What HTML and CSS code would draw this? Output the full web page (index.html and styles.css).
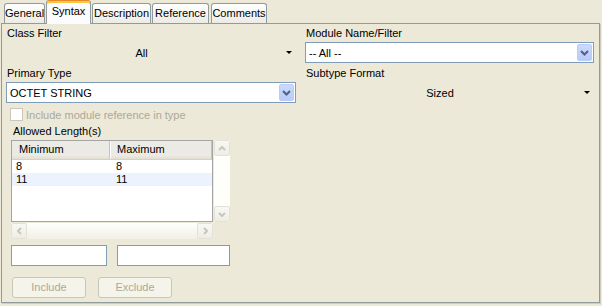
FILE: index.html
```html
<!DOCTYPE html>
<html lang="en">
<head>
    <meta charset="UTF-8">
    <title>Syntax</title>
    <link rel="stylesheet" href="styles.css">
</head>
<body>
    <div class="tabs">
        <div class="tab tab-general">General</div>
        <div class="tab tab-syntax active">Syntax</div>
        <div class="tab tab-description">Description</div>
        <div class="tab tab-reference">Reference</div>
        <div class="tab tab-comments">Comments</div>
    </div>

    <div class="panel">
        <div class="col">
            <div class="label">Class Filter</div>
            <div class="flat-combo">
                <span class="flat-value">All</span>
                <span class="tri"></span>
            </div>
            <div class="label">Primary Type</div>
            <div class="combo">
                <span class="combo-value">OCTET STRING</span>
                <span class="combo-btn">
                    <svg width="9" height="6" viewBox="0 0 9 6"><path d="M1 1 L4.5 4.5 L8 1" stroke="#4d6185" stroke-width="2" fill="none"/></svg>
                </span>
            </div>
            <div class="check-row">
                <span class="checkbox"></span>
                <span class="disabled-text">Include module reference in type</span>
            </div>

            <div class="lengths">
                <div class="group-label">Allowed Length(s)</div>
                <div class="table-area">
                    <div class="table-left">
                        <div class="table">
                            <div class="thead">
                                <div class="th th-min">Minimum</div>
                                <div class="th th-max">Maximum</div>
                            </div>
                            <div class="tr">
                                <div class="td td-min">8</div>
                                <div class="td">8</div>
                            </div>
                            <div class="tr alt">
                                <div class="td td-min">11</div>
                                <div class="td">11</div>
                            </div>
                        </div>
                        <div class="hscroll">
                            <span class="sbtn">
                                <svg width="5" height="8" viewBox="0 0 5 8"><path d="M4 1 L1 4 L4 7" stroke="#c9c7ba" stroke-width="2" fill="none"/></svg>
                            </span>
                            <span class="sbtn">
                                <svg width="5" height="8" viewBox="0 0 5 8"><path d="M1 1 L4 4 L1 7" stroke="#c9c7ba" stroke-width="2" fill="none"/></svg>
                            </span>
                        </div>
                    </div>
                    <div class="vscroll">
                        <span class="sbtn">
                            <svg width="8" height="5" viewBox="0 0 8 5"><path d="M1 4 L4 1 L7 4" stroke="#c9c7ba" stroke-width="2" fill="none"/></svg>
                        </span>
                        <span class="sbtn">
                            <svg width="8" height="5" viewBox="0 0 8 5"><path d="M1 1 L4 4 L7 1" stroke="#c9c7ba" stroke-width="2" fill="none"/></svg>
                        </span>
                    </div>
                </div>
                <div class="inputs">
                    <div class="field field-min"></div>
                    <div class="field field-max"></div>
                </div>
                <div class="buttons">
                    <div class="btn">Include</div>
                    <div class="btn">Exclude</div>
                </div>
            </div>
        </div>

        <div class="col">
            <div class="label">Module Name/Filter</div>
            <div class="combo">
                <span class="combo-value">-- All --</span>
                <span class="combo-btn">
                    <svg width="9" height="6" viewBox="0 0 9 6"><path d="M1 1 L4.5 4.5 L8 1" stroke="#4d6185" stroke-width="2" fill="none"/></svg>
                </span>
            </div>
            <div class="label">Subtype Format</div>
            <div class="flat-combo">
                <span class="flat-value">Sized</span>
                <span class="tri"></span>
            </div>
        </div>
    </div>
</body>
</html>
```

FILE: styles.css
```css
* {
    margin: 0;
    padding: 0;
    box-sizing: border-box;
}

body {
    font-family: "Liberation Sans", Arial, sans-serif;
    font-size: 11px;
    background: #ece9d8;
    color: #000;
    width: 602px;
    height: 306px;
    overflow: hidden;
}

/* tabs */

.tabs {
    display: flex;
    align-items: flex-end;
    height: 23px;
    padding-left: 4px;
    position: relative;
    z-index: 1;
}

.tab {
    height: 20px;
    line-height: 19px;
    text-align: center;
    border: 1px solid #919b9c;
    border-bottom: none;
    border-radius: 3px 3px 0 0;
    background: linear-gradient(#ffffff, #f3f3ef 60%, #ecebe6);
    margin-right: 1px;
}

.tab-general { width: 41px; }
.tab-syntax { width: 45px; }
.tab-description { width: 59px; }
.tab-reference { width: 57px; margin-right: 2px; }
.tab-comments { width: 56px; }

.tab.active {
    height: 24px;
    margin-bottom: -1px;
    line-height: 21px;
    background: #fcfcfe;
    border-top: 1px solid #e68b2c;
    box-shadow: inset 0 2px 0 #ffc83c;
}

/* panel */

.panel {
    margin-left: 1px;
    width: 599px;
    height: 280px;
    border: 1px solid #919b9c;
    box-shadow: 1px 1px 0 #d0cdbd;
    padding-left: 4px;
    display: grid;
    grid-template-columns: 290px 289px;
    column-gap: 9px;
    align-items: start;
}

.label {
    height: 18px;
    line-height: 18px;
    padding-left: 1px;
}

.flat-combo {
    height: 21px;
    display: flex;
    align-items: center;
    margin-bottom: 1px;
}

.flat-value {
    flex: 1;
    text-align: center;
    padding-left: 1px;
}

.tri {
    width: 0;
    height: 0;
    border-left: 3px solid transparent;
    border-right: 3px solid transparent;
    border-top: 3px solid #000;
    margin: 0 4px 0 10px;
}

.combo {
    height: 21px;
    border: 1px solid #7f9db9;
    background: #fff;
    display: flex;
    align-items: center;
    margin-bottom: 1px;
}

.combo-value {
    flex: 1;
    padding-left: 3px;
}

.combo-btn {
    width: 15px;
    height: 17px;
    margin-right: 1px;
    border: 1px solid #bacdf9;
    border-radius: 2px;
    background: linear-gradient(#cbdafd, #b8cbf7);
    display: flex;
    align-items: center;
    justify-content: center;
}

/* checkbox */

.check-row {
    display: flex;
    align-items: center;
    height: 13px;
    margin: 5px 0 0 4px;
}

.checkbox {
    width: 13px;
    height: 13px;
    border: 1px solid #cac8bb;
    background: #fff;
    margin-right: 3px;
}

.disabled-text {
    color: #aca899;
}

/* allowed lengths */

.lengths {
    margin-left: 5px;
}

.group-label {
    height: 17px;
    line-height: 17px;
    margin-top: 2px;
    padding-left: 2px;
}

.table-area {
    display: flex;
    gap: 1px;
}

.table-left {
    width: 202px;
}

.table {
    height: 82px;
    border: 1px solid #a5a5a5;
    background: #fff;
}

.thead {
    display: flex;
    height: 19px;
    line-height: 17px;
    background: linear-gradient(#ebeae4, #ebeae4 80%, #e2dfd0);
    border-bottom: 1px solid #d6d2c2;
}

.th {
    height: 100%;
}

.th-min {
    width: 98px;
    padding-left: 7px;
    border-right: 1px solid #c7c5b2;
    box-shadow: 1px 0 0 #fff;
}

.th-max {
    flex: 1;
    padding-left: 7px;
    border-right: 1px solid #c7c5b2;
}

.tr {
    display: flex;
    height: 13px;
    line-height: 13px;
}

.tr.alt {
    background: #edf3fe;
}

.td {
    padding-left: 4px;
}

.td-min {
    width: 100px;
}

.hscroll {
    height: 16px;
    margin-top: 1px;
    display: flex;
    justify-content: space-between;
    background: linear-gradient(#fefefb, #f1efe6);
}

.vscroll {
    width: 16px;
    height: 82px;
    display: flex;
    flex-direction: column;
    justify-content: space-between;
    background: #fefefa;
}

.sbtn {
    width: 16px;
    height: 16px;
    border: 1px solid #e4e2d6;
    border-radius: 2px;
    background: linear-gradient(#f8f8f4, #eeede5);
    display: flex;
    align-items: center;
    justify-content: center;
}

.inputs {
    display: flex;
    gap: 10px;
    margin-top: 6px;
}

.field {
    height: 21px;
    border: 1px solid #7f9db9;
    background: #fff;
}

.field-min { width: 96px; }
.field-max { width: 113px; }

.buttons {
    display: flex;
    gap: 12px;
    margin: 11px 0 0 1px;
}

.btn {
    width: 74px;
    height: 21px;
    line-height: 19px;
    text-align: center;
    color: #aca899;
    background: #f5f4ea;
    border: 1px solid #c9c7ba;
    border-radius: 3px;
}
```
